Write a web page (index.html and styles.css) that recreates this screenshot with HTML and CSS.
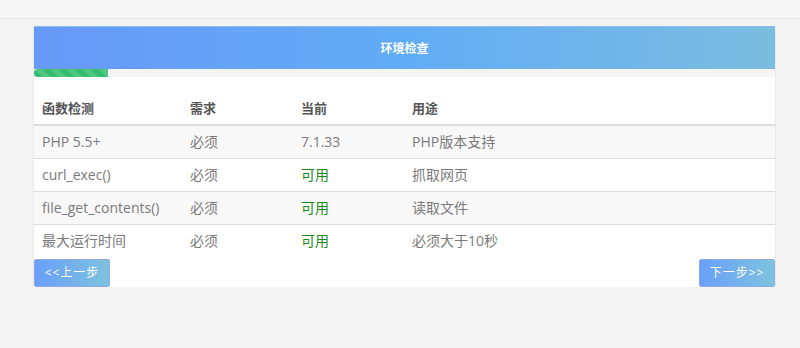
FILE: index.html
```html
<!DOCTYPE html>
<html lang="zh-CN">
<head>
<meta charset="utf-8">
<title>环境检查</title>
<link rel="stylesheet" href="styles.css">
</head>
<body>
<div class="topbar"></div>
<div class="card">
  <div class="card-head">环境检查</div>
  <div class="progress"><div class="progress-bar"></div></div>
  <table class="table">
    <colgroup>
      <col class="c1"><col class="c2"><col class="c3"><col class="c4">
    </colgroup>
    <thead>
      <tr><th>函数检测</th><th>需求</th><th>当前</th><th>用途</th></tr>
    </thead>
    <tbody>
      <tr><td>PHP 5.5+</td><td>必须</td><td>7.1.33</td><td>PHP版本支持</td></tr>
      <tr><td>curl_exec()</td><td>必须</td><td class="ok">可用</td><td>抓取网页</td></tr>
      <tr><td>file_get_contents()</td><td>必须</td><td class="ok">可用</td><td>读取文件</td></tr>
      <tr><td>最大运行时间</td><td>必须</td><td class="ok">可用</td><td>必须大于10秒</td></tr>
    </tbody>
  </table>
  <div class="actions">
    <a class="btn">&lt;&lt;上一步</a>
    <a class="btn">下一步&gt;&gt;</a>
  </div>
</div>
</body>
</html>
```

FILE: styles.css
```css
html, body {
  margin: 0;
  padding: 0;
  background: #f4f4f4;
  font-family: "Open Sans", "Noto Sans CJK SC", sans-serif;
  font-size: 14px;
  color: #7a7a7a;
}
.topbar {
  height: 18px;
  background: #f7f7f7;
  border-bottom: 1px solid #e4e4e4;
}
.card {
  width: 741px;
  margin: 7px 0 0 34px;
  background: #fff;
  box-shadow: 0 1px 2px rgba(0,0,0,0.12);
}
.card-head {
  height: 43px;
  line-height: 43px;
  text-align: center;
  color: #fff;
  font-weight: bold;
  font-size: 12px;
  background: linear-gradient(to right, #6799f7 0%, #62acf5 50%, #7bbde0 100%);
  border-top: 1px solid #8cc0f0;
  box-sizing: border-box;
}
.progress {
  height: 8px;
  background: #f5f5f5;
}
.progress-bar {
  width: 74px;
  height: 8px;
  border-radius: 4px 0 0 4px;
  background-color: #33bc6c;
  background-image: linear-gradient(45deg, rgba(255,255,255,.15) 25%, transparent 25%, transparent 50%, rgba(255,255,255,.15) 50%, rgba(255,255,255,.15) 75%, transparent 75%, transparent);
  background-size: 16px 16px;
}
.table {
  width: 100%;
  margin-top: 15px;
  border-collapse: collapse;
  border-spacing: 0;
}
.c1 { width: 148px; }
.c2 { width: 111px; }
.c3 { width: 111px; }
.table th {
  text-align: left;
  font-weight: bold;
  font-size: 13px;
  color: #555;
  padding: 7px 8px;
  line-height: 18px;
  border-bottom: 2px solid #ddd;
}
.table td {
  padding: 7px 8px;
  line-height: 18px;
  border-top: 1px solid #ddd;
}
.table tbody tr:nth-child(odd) {
  background: #f8f8f8;
}
.table td.ok {
  color: #1a8a1a;
}
.actions {
  display: flex;
  justify-content: space-between;
  margin-top: 2px;
}
.btn {
  display: block;
  width: 76px;
  height: 28px;
  line-height: 26px;
  box-sizing: border-box;
  text-align: center;
  color: #fff;
  font-size: 12px;
  letter-spacing: 1px;
  border: 1px solid #93a9e6;
  border-radius: 2px;
  background: linear-gradient(to right, #6a9ff8, #7dc3df);
}
```
